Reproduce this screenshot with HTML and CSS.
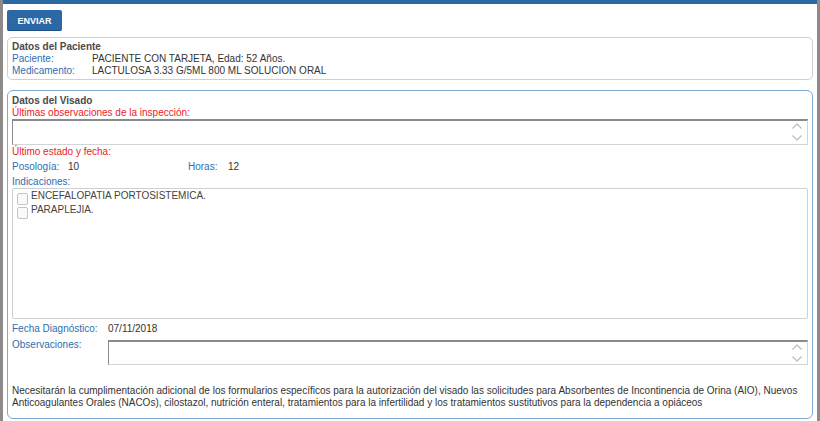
FILE: index.html
```html
<!DOCTYPE html>
<html lang="es">
<head>
<meta charset="utf-8">
<title>Visado</title>
<link rel="stylesheet" href="styles.css">
</head>
<body>
<div class="page">
  <div class="topbar"></div>
  <div class="toolbar"><button class="btn" type="button">ENVIAR</button></div>

  <section class="box box-paciente">
    <div class="title">Datos del Paciente</div>
    <div class="kv"><span class="lbl w80">Paciente:</span><span class="val">PACIENTE CON TARJETA, Edad: 52 Años.</span></div>
    <div class="kv"><span class="lbl w80">Medicamento:</span><span class="val">LACTULOSA 3.33 G/5ML 800 ML SOLUCION ORAL</span></div>
  </section>

  <section class="box box-visado">
    <div class="title">Datos del Visado</div>
    <div class="red">Últimas observaciones de la inspección:</div>
    <div class="ta ta-insp">
      <span class="spin"><svg width="12" height="22" viewBox="0 0 12 22"><path d="M1.5 7.5 L6 3 L10.5 7.5" fill="none" stroke="#bfbfbf" stroke-width="1.3"/><path d="M1.5 14.5 L6 19 L10.5 14.5" fill="none" stroke="#bfbfbf" stroke-width="1.3"/></svg></span>
    </div>
    <div class="red red-2">Último estado y fecha:</div>
    <div class="kv pos">
      <span class="lbl w56">Posología:</span><span class="val w120">10</span>
      <span class="lbl w40">Horas:</span><span class="val">12</span>
    </div>
    <div class="lbl">Indicaciones:</div>
    <div class="list">
      <label class="item"><span class="cb"></span><span>ENCEFALOPATIA PORTOSISTEMICA.</span></label>
      <label class="item"><span class="cb"></span><span>PARAPLEJIA.</span></label>
    </div>
    <div class="kv fecha"><span class="lbl w96">Fecha Diagnóstico:</span><span class="val">07/11/2018</span></div>
    <div class="obs">
      <span class="lbl w96 obs-lbl">Observaciones:</span>
      <div class="ta ta-obs">
        <span class="spin"><svg width="12" height="22" viewBox="0 0 12 22"><path d="M1.5 7.5 L6 3 L10.5 7.5" fill="none" stroke="#bfbfbf" stroke-width="1.3"/><path d="M1.5 14.5 L6 19 L10.5 14.5" fill="none" stroke="#bfbfbf" stroke-width="1.3"/></svg></span>
      </div>
    </div>
    <p class="notice">Necesitarán la cumplimentación adicional de los formularios específicos para la autorización del visado las solicitudes para Absorbentes de Incontinencia de Orina (AIO), Nuevos Anticoagulantes Orales (NACOs), cilostazol, nutrición enteral, tratamientos para la infertilidad y los tratamientos sustitutivos para la dependencia a opiáceos</p>
  </section>
</div>
</body>
</html>
```

FILE: styles.css
```css
html, body {
  margin: 0;
  padding: 0;
}
body {
  background: #8f8a8a;
  font-family: "Liberation Sans", Arial, sans-serif;
  font-size: 10px;
  line-height: 12px;
  color: #333;
  height: 421px;
  overflow: hidden;
}
.page {
  margin: 0 3px;
  background: #fff;
  height: 421px;
}
.topbar {
  height: 4px;
  background: #2b69a3;
}
.toolbar {
  padding: 6px 4px 0;
  display: flex;
}
.btn {
  width: 55px;
  height: 21px;
  padding: 1px 0 0;
  border: 0;
  border-radius: 2px;
  background: #2a68a6;
  border-bottom: 1px solid #1d4f82;
  color: #fff;
  font-family: "Liberation Sans Narrow", "Liberation Sans", Arial, sans-serif;
  font-weight: bold;
  font-size: 9px;
}
.box {
  margin: 0 4px;
  border: 1px solid #cfcfcf;
  border-radius: 5px;
}
.box-paciente {
  margin-top: 6px;
  padding: 3px 4px 1px;
  height: 37px;
}
.box-visado {
  margin-top: 10px;
  border-color: #7ea9d1;
  border-radius: 6px;
  padding: 4px 4px 0;
  height: 323px;
}
.title {
  font-weight: bold;
  color: #4a4a4a;
}
.kv {
  display: flex;
}
.lbl {
  color: #2f6db0;
}
.val {
  color: #333;
}
.w80 { width: 80px; flex: none; }
.w56 { width: 56px; flex: none; }
.w120 { width: 120px; flex: none; }
.w40 { width: 40px; flex: none; }
.w96 { width: 96px; flex: none; }
.red {
  color: #ec2027;
}
.red-2 {
  margin-top: 1px;
}
.ta {
  position: relative;
  background: #fff;
  border: 1px solid #d4d4d4;
  border-top: 2px solid #8a8a8a;
  border-left: 1px solid #8a8a8a;
  box-sizing: border-box;
}
.ta-insp {
  margin-top: 0;
  height: 26px;
}
.spin {
  position: absolute;
  right: 4px;
  top: 0;
  display: flex;
}
.pos {
  margin-top: 3px;
}
.pos + .lbl {
  margin-top: 3px;
}
.list {
  height: 131px;
  border: 1px solid #d0d0d0;
  border-radius: 2px;
  box-sizing: border-box;
  padding: 1px 4px;
}
.item {
  display: flex;
  align-items: flex-start;
  gap: 3px;
  height: 14px;
  color: #444;
}
.cb {
  width: 9px;
  height: 10px;
  margin-top: 3px;
  border: 1px solid #c4c4c4;
  border-radius: 2px;
  background: #fafafa;
  flex: none;
}
.fecha {
  margin-top: 4px;
}
.obs {
  display: flex;
  margin-top: 5px;
}
.obs-lbl {
  margin-top: -1px;
}
.ta-obs {
  flex: 1;
  height: 25px;
}
.notice {
  margin: 20px 0 0;
  color: #333;
}
```
